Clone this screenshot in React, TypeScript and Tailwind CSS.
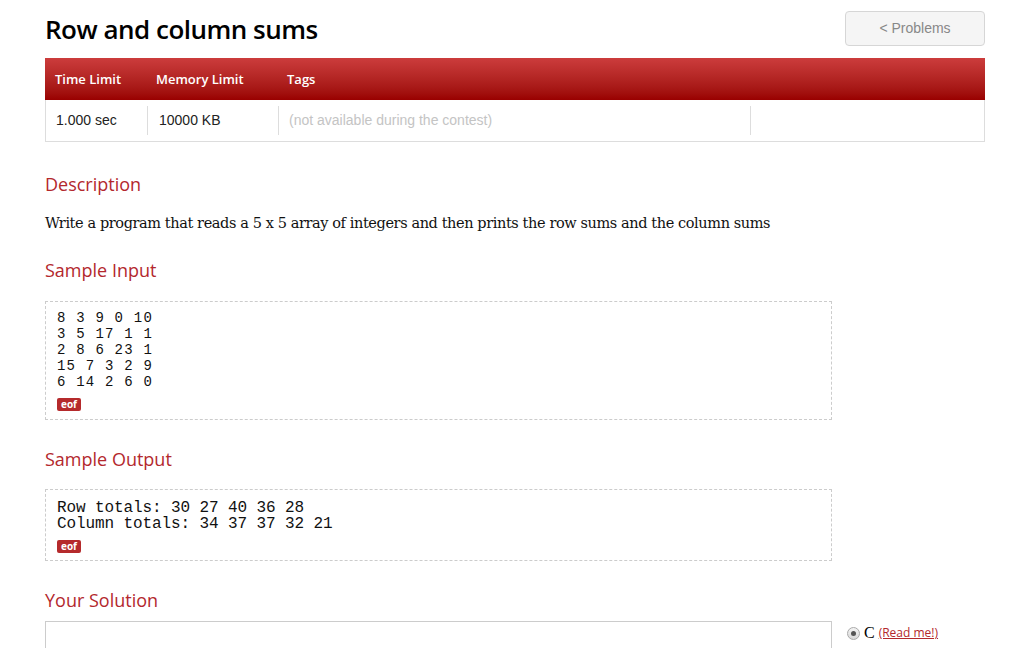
export default function App() {
  const heading = "text-[18px] text-[#b3282d] font-['Open_Sans',sans-serif] leading-none";
  const eof = "inline-block px-[4px] h-[13px] leading-[13px] rounded-[2px] bg-[#b52a2c] text-white text-[10px] font-bold font-['Open_Sans',sans-serif]";
  return (
    <div className="w-[1015px] h-[648px] overflow-hidden bg-white">
      <div className="ml-[45px] w-[940px]">
        <div className="flex items-center justify-between h-[58px]">
          <h1 className="text-[26px] font-semibold text-black font-['Open_Sans',sans-serif] tracking-[-0.5px]">
            Row and column sums
          </h1>
          <button className="w-[140px] h-[35px] mb-[2px] pt-[1px] rounded-[4px] border border-[#d6d6d6] bg-[#f5f5f5] text-[14px] text-[#888] font-['Liberation_Sans',sans-serif]">
            &lt; Problems
          </button>
        </div>

        <div className="border border-[#dddddd] border-t-0">
          <div className="flex h-[42px] pt-[2px] items-center bg-gradient-to-b from-[#cc3c3c] to-[#990000] text-white text-[13px] font-semibold font-['Open_Sans',sans-serif] -mx-px">
            <div className="w-[101px] pl-[10px]">Time Limit</div>
            <div className="w-[131px] pl-[10px]">Memory Limit</div>
            <div className="flex-1 pl-[10px]">Tags</div>
          </div>
          <div className="flex h-[41px] items-center text-[14px] text-[#222] font-['Liberation_Sans',sans-serif]">
            <div className="w-[101px] pl-[10px] h-[29px] flex items-center">1.000 sec</div>
            <div className="w-[131px] pl-[11px] h-[29px] flex items-center border-l border-[#ddd]">10000 KB</div>
            <div className="w-[472px] pl-[10px] h-[29px] flex items-center border-l border-[#ddd] text-[#c4c4c4]">
              (not available during the contest)
            </div>
            <div className="flex-1 h-[29px] border-l border-[#ddd]"></div>
          </div>
        </div>

        <h2 className={`${heading} mt-[33px]`}>Description</h2>
        <p className="mt-[20px] text-[14.5px] text-[#111] font-['DejaVu_Serif',serif] leading-[20px] tracking-[-0.4px]">
          Write a program that reads a 5 x 5 array of integers and then prints the row sums and the column sums
        </p>

        <h2 className={`${heading} mt-[28px]`}>Sample Input</h2>
        <div className="mt-[22px] w-[787px] h-[119px] border border-dashed border-[#cccccc] pl-[11px] pt-[8px]">
          <pre className="text-[14px] leading-[16px] text-[#111] font-['Liberation_Mono',monospace] tracking-[1.2px]">
{`8 3 9 0 10
3 5 17 1 1
2 8 6 23 1
15 7 3 2 9
6 14 2 6 0`}
          </pre>
          <span className={`${eof} mt-[4px]`}>eof</span>
        </div>

        <h2 className={`${heading} mt-[30px]`}>Sample Output</h2>
        <div className="mt-[21px] w-[787px] h-[72px] border border-dashed border-[#cccccc] pl-[11px] pt-[10px]">
          <pre className="text-[16px] leading-[16px] text-[#111] font-['Liberation_Mono',monospace] tracking-[-0.1px]">
{`Row totals: 30 27 40 36 28
Column totals: 34 37 37 32 21`}
          </pre>
          <span className={`${eof} mt-[3px]`}>eof</span>
        </div>

        <h2 className={`${heading} mt-[30px]`}>Your Solution</h2>
        <div className="mt-[12px] flex items-start">
          <div className="w-[787px] h-[40px] border border-[#cccccc]"></div>
          <div className="ml-[15px] flex items-center gap-[4px]">
            <span className="w-[13px] h-[13px] rounded-full border border-[#aaa] bg-gradient-to-b from-[#f4f4f4] to-[#d8d8d8] flex items-center justify-center">
              <span className="w-[5px] h-[5px] rounded-full bg-[#555]"></span>
            </span>
            <span className="text-[16px] text-black font-['Liberation_Serif',serif]">C</span>
            <a className="text-[12px] text-[#b3282d] underline font-['Open_Sans',sans-serif]">(Read me!)</a>
          </div>
        </div>
      </div>
    </div>
  );
}
